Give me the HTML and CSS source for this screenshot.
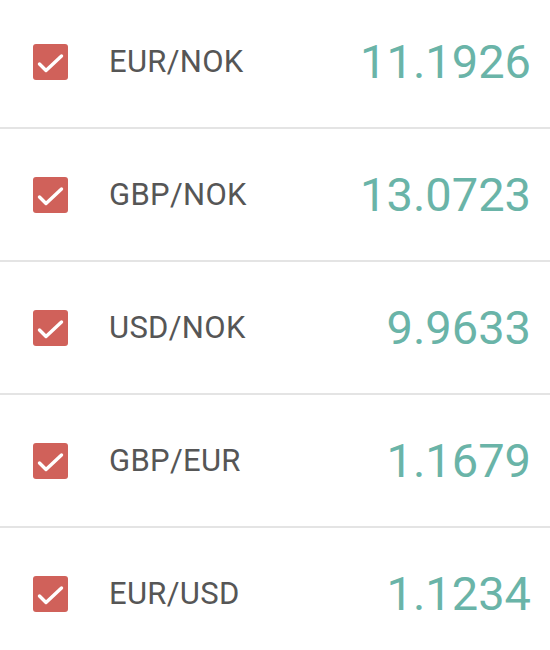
FILE: index.html
```html
<!DOCTYPE html>
<html>
<head>
<meta charset="utf-8">
<link rel="stylesheet" href="styles.css">
</head>
<body>
<div class="list">
  <div class="row">
    <span class="check"><svg viewBox="0 0 35 36" width="35" height="36"><path d="M6.5 20 L13 26.5 L28.5 12" fill="none" stroke="#fff" stroke-width="3.4" stroke-linecap="round" stroke-linejoin="round"/></svg></span>
    <span class="pair">EUR/NOK</span>
    <span class="rate">11.1926</span>
  </div>
  <div class="row">
    <span class="check"><svg viewBox="0 0 35 36" width="35" height="36"><path d="M6.5 20 L13 26.5 L28.5 12" fill="none" stroke="#fff" stroke-width="3.4" stroke-linecap="round" stroke-linejoin="round"/></svg></span>
    <span class="pair">GBP/NOK</span>
    <span class="rate">13.0723</span>
  </div>
  <div class="row">
    <span class="check"><svg viewBox="0 0 35 36" width="35" height="36"><path d="M6.5 20 L13 26.5 L28.5 12" fill="none" stroke="#fff" stroke-width="3.4" stroke-linecap="round" stroke-linejoin="round"/></svg></span>
    <span class="pair">USD/NOK</span>
    <span class="rate">9.9633</span>
  </div>
  <div class="row">
    <span class="check"><svg viewBox="0 0 35 36" width="35" height="36"><path d="M6.5 20 L13 26.5 L28.5 12" fill="none" stroke="#fff" stroke-width="3.4" stroke-linecap="round" stroke-linejoin="round"/></svg></span>
    <span class="pair">GBP/EUR</span>
    <span class="rate">1.1679</span>
  </div>
  <div class="row">
    <span class="check"><svg viewBox="0 0 35 36" width="35" height="36"><path d="M6.5 20 L13 26.5 L28.5 12" fill="none" stroke="#fff" stroke-width="3.4" stroke-linecap="round" stroke-linejoin="round"/></svg></span>
    <span class="pair">EUR/USD</span>
    <span class="rate">1.1234</span>
  </div>
</div>
</body>
</html>
```
FILE: styles.css
```css
html, body {
  margin: 0;
  padding: 0;
  background: #fff;
}
body {
  font-family: Roboto, "Liberation Sans", sans-serif;
  overflow: hidden;
}
.list {
  margin-top: -4px;
}
.row {
  height: 131px;
  display: flex;
  align-items: center;
  border-bottom: 2px solid #e4e4e4;
  padding: 0 19px 0 33px;
}
.row:last-child {
  border-bottom: none;
}
.check {
  width: 35px;
  height: 36px;
  background: #d0615a;
  border-radius: 3px;
  display: flex;
  align-items: center;
  justify-content: center;
  flex: none;
}
.check svg {
  display: block;
}
.pair {
  margin-left: 41px;
  font-size: 31px;
  letter-spacing: 0.3px;
  color: #565656;
  flex: 1;
}
.rate {
  font-size: 47px;
  font-weight: 400;
  color: #6ab4a8;
}
```
